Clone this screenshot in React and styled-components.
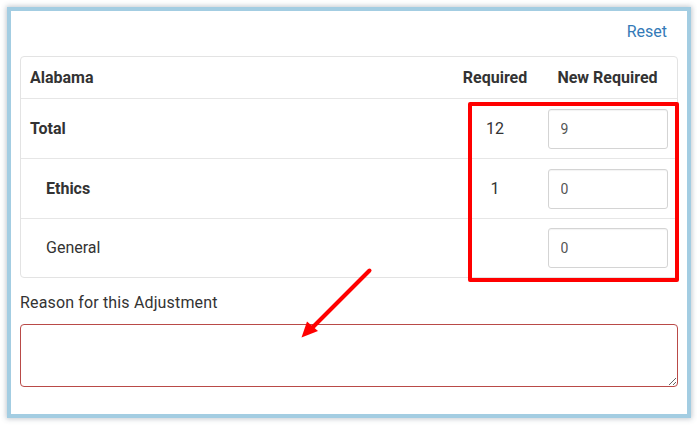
import React from "react";
import styled, { createGlobalStyle } from "styled-components";

const Global = createGlobalStyle`
  html, body { margin: 0; padding: 0; background: #ffffff; }
  body { font-family: Roboto, "Liberation Sans", Arial, sans-serif; color: #333; }
  * { box-sizing: border-box; }
`;

const Frame = styled.div`
  position: relative;
  width: 684px;
  margin: 7px;
  border: 4px solid #a3cde2;
  background: #fff;
  box-shadow: 0 0 5px 1px rgba(60, 80, 100, 0.3);
  padding: 0 9px 27px 9px;
`;

const TopBar = styled.div`
  height: 45px;
  padding-bottom: 3px;
  padding-right: 11px;
  display: flex;
  align-items: center;
  justify-content: flex-end;
`;

const ResetLink = styled.a`
  font-size: 16px;
  line-height: 20px;
  color: #337ab7;
  text-decoration: none;
  cursor: pointer;
`;

const Card = styled.div`
  border: 1px solid #e3e3e3;
  border-radius: 4px;
  overflow: hidden;
`;

const Row = styled.div`
  display: grid;
  grid-template-columns: 1fr 86px 139px;
  align-items: center;
  height: ${(p) => (p.$header ? "41px" : "60px")};
  border-top: ${(p) => (p.$first ? "none" : "1px solid #e6e6e6")};
  &:last-child {
    height: 59px;
  }
`;

const NameCell = styled.div`
  padding-left: ${(p) => (p.$indent ? "25px" : "9px")};
  font-size: 16px;
  line-height: 20px;
  font-weight: ${(p) => (p.$bold ? 700 : 400)};
  color: #333;
`;

const CenterCell = styled.div`
  text-align: center;
  font-size: 16px;
  line-height: 20px;
  font-weight: ${(p) => (p.$bold ? 700 : 400)};
  color: #333;
`;

const InputCell = styled.div`
  display: flex;
  justify-content: center;
`;

const NumInput = styled.input`
  width: 120px;
  height: 40px;
  border: 1px solid #d4d4d4;
  border-radius: 3px;
  padding: 0 12px;
  font-family: Roboto, "Liberation Sans", Arial, sans-serif;
  font-size: 14px;
  color: #555;
  box-shadow: inset 0 1px 1px rgba(0, 0, 0, 0.05);
  outline: none;
`;

const Label = styled.div`
  margin-top: 15px;
  font-size: 16px;
  line-height: 20px;
  font-weight: 400;
  letter-spacing: 0.15px;
  color: #333;
`;

const Reason = styled.textarea`
  display: block;
  margin-top: 11px;
  width: 100%;
  height: 63px;
  border: 1px solid #b94a48;
  border-radius: 4px;
  font-family: Roboto, "Liberation Sans", Arial, sans-serif;
  font-size: 14px;
  padding: 6px 12px;
  outline: none;
`;

const HighlightBox = styled.div`
  position: absolute;
  left: 457px;
  top: 91px;
  width: 211px;
  height: 180px;
  border: 4px solid #ff0000;
  border-radius: 2px;
  pointer-events: none;
`;

const ArrowLayer = styled.svg`
  position: absolute;
  left: -11px;
  top: -11px;
  width: 697px;
  height: 427px;
  pointer-events: none;
  overflow: visible;
`;

const rows = [
  { name: "Total", bold: true, indent: false, req: "12", val: "9" },
  { name: "Ethics", bold: true, indent: true, req: "1", val: "0" },
  { name: "General", bold: false, indent: true, req: "", val: "0" },
];

export default function App() {
  return (
    <>
      <Global />
      <Frame>
        <TopBar>
          <ResetLink>Reset</ResetLink>
        </TopBar>
        <Card>
          <Row $header $first>
            <NameCell $bold>Alabama</NameCell>
            <CenterCell $bold>Required</CenterCell>
            <CenterCell $bold>New Required</CenterCell>
          </Row>
          {rows.map((r) => (
            <Row key={r.name}>
              <NameCell $bold={r.bold} $indent={r.indent}>
                {r.name}
              </NameCell>
              <CenterCell>{r.req}</CenterCell>
              <InputCell>
                <NumInput defaultValue={r.val} />
              </InputCell>
            </Row>
          ))}
        </Card>
        <Label>Reason for this Adjustment</Label>
        <Reason />
        <HighlightBox />
        <ArrowLayer viewBox="0 0 697 427">
          <line
            x1="369.5"
            y1="270.5"
            x2="312"
            y2="328"
            stroke="#ff0000"
            strokeWidth="4"
            strokeLinecap="round"
          />
          <polygon points="301.5,337.5 307,321.5 318,331" fill="#ff0000" />
        </ArrowLayer>
      </Frame>
    </>
  );
}
